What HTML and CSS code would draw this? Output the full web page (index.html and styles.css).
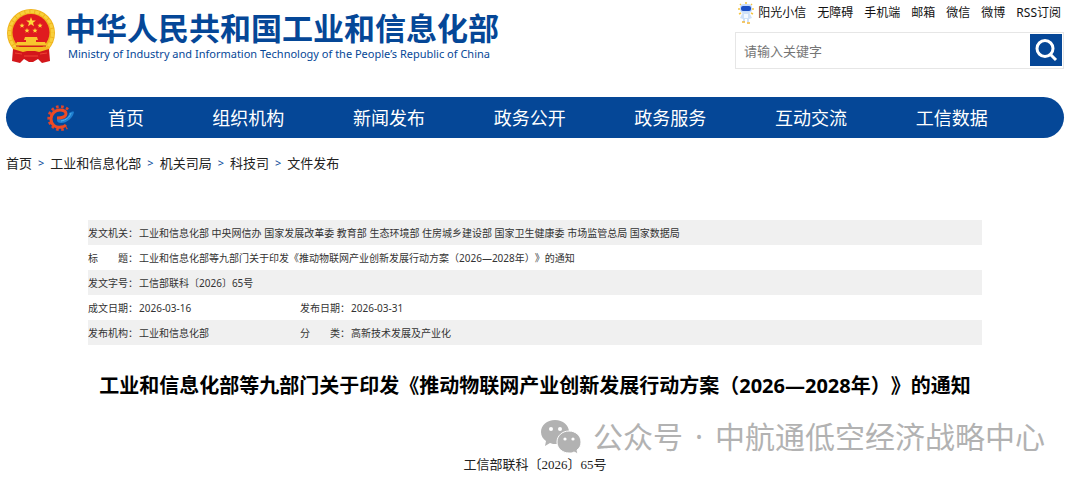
FILE: index.html
```html
<!DOCTYPE html>
<html lang="zh-CN">
<head>
    <meta charset="UTF-8">
    <meta name="viewport" content="width=device-width, initial-scale=1.0">
    <title>工业和信息化部</title>
    <link rel="stylesheet" href="styles.css">
</head>
<body>
    <header class="header">
        <a class="brand" href="#">
            <svg class="emblem" viewBox="0 0 50 54" aria-hidden="true">
                <circle cx="25" cy="24" r="24" fill="#f0b41c"/>
                <circle cx="25" cy="24" r="21.500" fill="none" stroke="#f8cf3c" stroke-width="3" stroke-dasharray="4 1"/>
                <circle cx="25" cy="23.500" r="18.500" fill="#e01b1f"/>
                <path d="M25 8l1.200 3.400 3.700.1-2.900 2.200 1 3.600-3-2.100-3 2.100 1-3.600-2.900-2.200 3.700-.1z" fill="#ffd93b"/>
                <g fill="#ffd93b">
                    <path id="star" d="M16 14l.7 1.700 1.900.1-1.500 1.200.5 1.800-1.600-1-1.600 1 .5-1.800-1.500-1.200 1.900-.1z"/>
                    <use href="#star" x="18"/>
                    <use href="#star" x="5" y="5"/>
                    <use href="#star" x="13" y="5"/>
                </g>
                <path d="M19 28h12l1 3h-2v2h9l2 4H9l2-4h9v-2h-2z" fill="#f8c52d"/>
                <path d="M6 38h38l-2 5H8z" fill="#f3bb22"/>
                <path d="M10 37h30" stroke="#c92017" fill="none"/>
                <path d="M7 40l10 3 4-1h8l4 1 10-3 1 12-8 2-4-4-5 3h-4l-5-3-4 4-8-2z" fill="#d3171b"/>
                <path d="M20 42a5 4 0 0 1 10 0z" fill="#f4b925"/>
                <path d="M9 44l7 1M41 44l-7 1M18 47h14" stroke="#ef4434" fill="none"/>
            </svg>
            <span class="brand-text">
                <span class="brand-cn">中华人民共和国工业和信息化部</span>
                <span class="brand-en">Ministry of Industry and Information Technology of the People’s Republic of China</span>
            </span>
        </a>

        <div class="tools">
            <div class="quick-links">
                <a class="mascot-link" href="#">
                    <svg class="mascot" viewBox="0 0 16 22" aria-hidden="true">
                        <path d="M3 3l-1-1M8 2V0M13 3l1-1M2 7H0M14 7h2M3 11l-2 1M13 11l2 1" stroke="#f5c542" stroke-width="1.500"/>
                        <rect x="2" y="2" width="12" height="9" rx="4" fill="#c9dcf8"/>
                        <rect x="3" y="4" width="10" height="5" rx="2" fill="#1c4fc4"/>
                        <path d="M5 10h6l3 6-3 1v3H9v-3H7v3H5v-3l-3-1z" fill="#cfe1f8"/>
                        <path d="M6 12h4v4H6z" fill="#f4f9ff"/>
                        <path d="M4 20h3M9 21h3" stroke="#f2b63a" stroke-width="1.500"/>
                    </svg>
                    阳光小信
                </a>
                <a href="#">无障碍</a>
                <a href="#">手机端</a>
                <a href="#">邮箱</a>
                <a href="#">微信</a>
                <a href="#">微博</a>
                <a href="#">RSS订阅</a>
            </div>
            <form class="search">
                <input type="text" placeholder="请输入关键字" aria-label="请输入关键字">
                <button type="button" aria-label="搜索">
                    <svg viewBox="0 0 32 32" aria-hidden="true">
                        <circle cx="15" cy="14.500" r="8" fill="none" stroke="#fff" stroke-width="3"/>
                        <path d="M20 20l6 6" stroke="#fff" stroke-width="3"/>
                    </svg>
                </button>
            </form>
        </div>
    </header>

    <nav class="nav">
        <svg class="nav-logo" viewBox="0 0 28 28" aria-hidden="true">
            <path d="M22 5.500A11.500 11.500 0 1 0 21 23.500" fill="none" stroke="#e0452a" stroke-width="3" stroke-dasharray="2.600 2.400"/>
            <path d="M12 14c4 3 11 0 11-5 2-1 4-2 5-1-1 6-7 11-13 11-4 0-5-3-3-5z" fill="#1f7fd0"/>
            <path d="M15 17c5-1 9-4 10-8" fill="none" stroke="#4fb3ee"/>
            <path d="M11 14c6 0 9-2 9-4 0-3-3-4-6-4-5 0-9 4-9 9 0 6 5 9 10 8 2 0 4-1 5-2" fill="none" stroke="#ec4b24" stroke-width="3"/>
        </svg>
        <a class="home" href="#">首页</a>
        <a href="#">组织机构</a>
        <a href="#">新闻发布</a>
        <a href="#">政务公开</a>
        <a href="#">政务服务</a>
        <a href="#">互动交流</a>
        <a href="#">工信数据</a>
    </nav>

    <div class="breadcrumb">
        <a href="#">首页</a>
        <span>&gt;</span>
        <a href="#">工业和信息化部</a>
        <span>&gt;</span>
        <a href="#">机关司局</a>
        <span>&gt;</span>
        <a href="#">科技司</a>
        <span>&gt;</span>
        <a href="#">文件发布</a>
    </div>

    <main class="article">
        <table class="info">
            <colgroup>
                <col class="col-label">
                <col class="col-value">
                <col class="col-label">
                <col>
            </colgroup>
            <tr>
                <th>发文机关：</th>
                <td colspan="3">工业和信息化部 中央网信办 国家发展改革委 教育部 生态环境部 住房城乡建设部 国家卫生健康委 市场监管总局 国家数据局</td>
            </tr>
            <tr>
                <th>标　　题：</th>
                <td colspan="3">工业和信息化部等九部门关于印发《推动物联网产业创新发展行动方案（2026—2028年）》的通知</td>
            </tr>
            <tr>
                <th>发文字号：</th>
                <td colspan="3">工信部联科〔2026〕65号</td>
            </tr>
            <tr>
                <th>成文日期：</th>
                <td>2026-03-16</td>
                <th>发布日期：</th>
                <td>2026-03-31</td>
            </tr>
            <tr>
                <th>发布机构：</th>
                <td>工业和信息化部</td>
                <th>分　　类：</th>
                <td>高新技术发展及产业化</td>
            </tr>
        </table>

        <h1>工业和信息化部等九部门关于印发《推动物联网产业创新发展行动方案（2026—2028年）》的通知</h1>
    </main>

    <div class="account">
        <svg class="wechat" viewBox="0 0 40 34" aria-hidden="true">
            <path d="M14 0C6 0 0 5 0 12c0 4 2 7 5 9l-1 5 5-3c2 1 4 1 6 1 8 0 13-5 13-12S22 0 14 0z" fill="#b2b2b2"/>
            <path d="M28 11c-7 0-12 5-12 11s5 11 12 11c2 0 3 0 5-1l4 2-1-4c3-2 4-5 4-8 0-6-5-11-12-11z" fill="#b2b2b2" stroke="#fff"/>
            <g fill="#fff">
                <circle cx="10" cy="9" r="2"/>
                <circle cx="19" cy="9" r="2"/>
                <circle cx="24" cy="19" r="1.600"/>
                <circle cx="32" cy="19" r="1.600"/>
            </g>
        </svg>
        <span>公众号</span>
        <span>·</span>
        <span>中航通低空经济战略中心</span>
    </div>

    <p class="doc-number">工信部联科〔2026〕65号</p>
</body>
</html>
```

FILE: styles.css
```css
* {
    box-sizing: border-box;
}

body {
    margin: 0;
    padding: 0 16px 0 6px;
    background: #fff;
    color: #222;
    font-family: "Noto Sans", "Noto Sans CJK SC", sans-serif;
    font-size: 13px;
    text-spacing-trim: space-all;
}

a {
    color: inherit;
    text-decoration: none;
}

.header {
    display: flex;
    justify-content: space-between;
    align-items: flex-start;
    height: 97px;
}

.brand {
    display: flex;
    gap: 9px;
    padding-top: 9px;
    color: #054797;
}

.emblem {
    width: 50px;
    height: 54px;
}

.brand-text {
    display: flex;
    flex-direction: column;
}

.brand-cn {
    font-size: 31px;
    font-weight: 700;
    line-height: 38px;
    white-space: nowrap;
}

.brand-en {
    padding-left: 3px;
    font-size: 11px;
    line-height: 14px;
    white-space: nowrap;
}

.tools {
    width: 329px;
}

.quick-links {
    display: flex;
    justify-content: flex-end;
    gap: 11px;
    height: 32px;
    padding: 2px 3px 0 0;
    color: #111;
    font-size: 12px;
    line-height: 22px;
    white-space: nowrap;
}

.mascot-link {
    display: flex;
    gap: 4px;
}

.mascot {
    width: 16px;
    height: 22px;
}

.search {
    display: flex;
    height: 37px;
    padding: 1px;
    border: 1px solid #e6e6e6;
}

.search input {
    flex: 1;
    min-width: 0;
    padding: 0 7px;
    border: 0;
    outline: 0;
    font-family: inherit;
    font-size: 13px;
}

.search input::placeholder {
    color: #757575;
}

.search button {
    width: 32px;
    height: 32px;
    padding: 0;
    border: 0;
    background: #054797;
    cursor: pointer;
}

.search button svg {
    display: block;
}

.nav {
    display: flex;
    align-items: center;
    height: 41px;
    padding: 0 42px 0 40px;
    border-radius: 21px;
    background: #054797;
    color: #fff;
    font-size: 18px;
    line-height: 24px;
}

.nav a {
    flex: 1;
    text-align: center;
}

.nav .home {
    flex: 0 0 104px;
}

.nav-logo {
    width: 28px;
    height: 28px;
}

.breadcrumb {
    display: flex;
    gap: 6px;
    padding-top: 15px;
    line-height: 20px;
}

.breadcrumb span {
    color: #054797;
    font-size: 11px;
}

.article {
    padding: 47px 82px 0;
}

.info {
    width: 100%;
    border-collapse: collapse;
    table-layout: fixed;
    color: #333;
    font-size: 10px;
}

.info th,
.info td {
    height: 25px;
    padding: 0;
    font-weight: 400;
    line-height: 14px;
    text-align: left;
    white-space: nowrap;
}

.info tr:nth-child(odd) {
    background: #f0f0f0;
}

.col-label {
    width: 51px;
}

.col-value {
    width: 161px;
}

h1 {
    margin: 26px 0 0;
    color: #000;
    font-size: 20px;
    line-height: 30px;
    text-align: center;
    white-space: nowrap;
}

.account {
    display: flex;
    justify-content: flex-end;
    align-items: center;
    gap: 12px;
    height: 34px;
    margin-top: 19px;
    padding-right: 19px;
    color: #b2b2b2;
    font-size: 30px;
    line-height: 34px;
}

.wechat {
    width: 40px;
    height: 34px;
}

.doc-number {
    margin: 1px 0 0;
    font-family: "Liberation Serif", "Noto Sans CJK SC", serif;
    line-height: 20px;
    text-align: center;
}
```
